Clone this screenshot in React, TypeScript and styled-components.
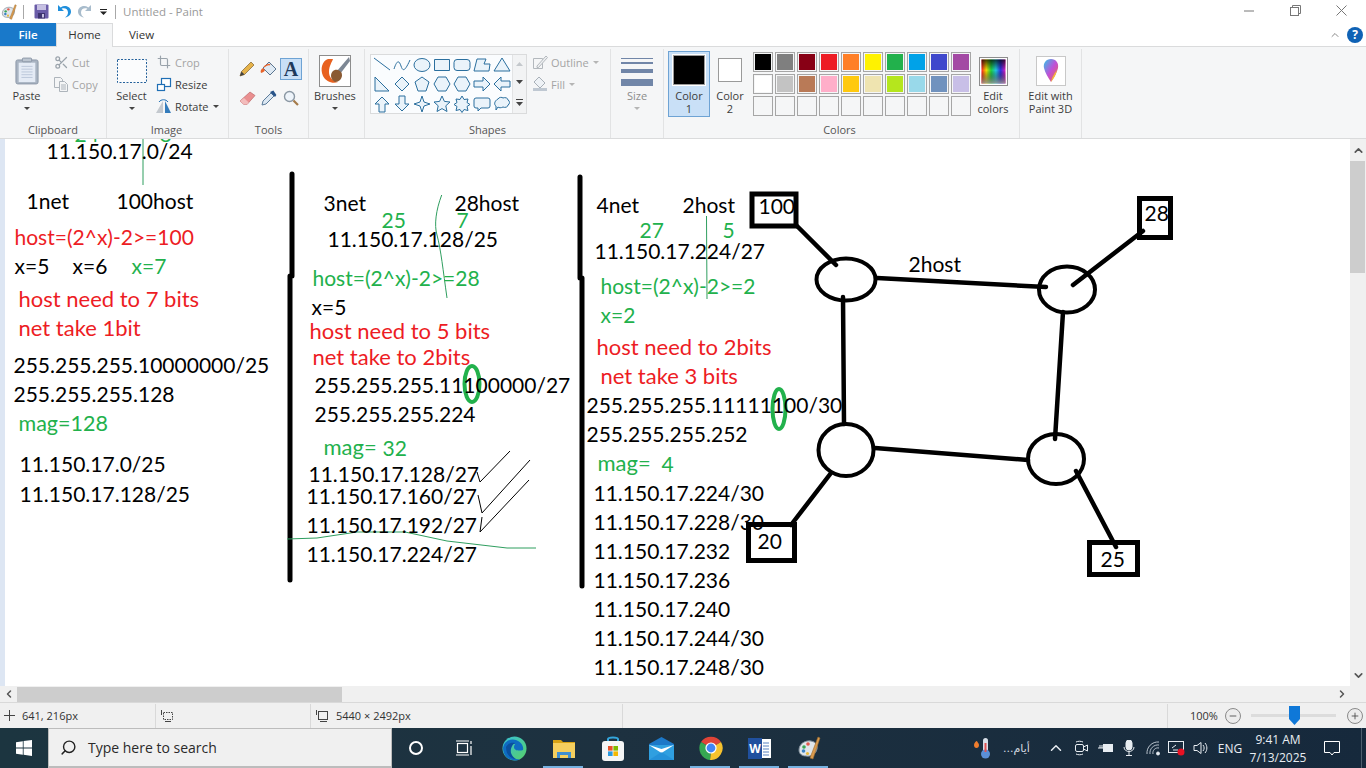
import styled, { createGlobalStyle } from 'styled-components'
import { ChevronUp, ChevronDown, ChevronLeft, ChevronRight, Minus, Plus, Search, Scissors, Crop } from 'lucide-react'

const GlobalStyle = createGlobalStyle`
  html, body { margin: 0; padding: 0; overflow: hidden; }
  body { font-family: "Open Sans", "Liberation Sans", sans-serif; background: #fff; }
`

const UI_TEXT = '#3c3c3c'
const RED = '#ed1c24'
const GREEN = '#22b14c'

const Page = styled.div`
  width: 1366px;
  height: 768px;
  display: flex;
  flex-direction: column;
  overflow: hidden;
`

/* ---------- title bar ---------- */

const TitleBar = styled.div`
  height: 23px;
  flex: none;
  display: flex;
  align-items: center;
  background: #fff;
  padding-right: 2px;
`

const QuickIcon = styled.div<{ $w: number; $ml?: number }>`
  width: ${p => p.$w}px;
  margin-left: ${p => p.$ml ?? 0}px;
  height: 16px;
  display: flex;
  align-items: center;
  justify-content: center;
`

const TitleSep = styled.div<{ $ml: number }>`
  width: 1px;
  height: 14px;
  margin-left: ${p => p.$ml}px;
  background: #a8a8a8;
`

const TitleText = styled.div`
  margin-left: 7px;
  font-size: 11.5px;
  color: #9a9a9a;
  flex: 1;
`

const WindowButton = styled.div`
  width: 46px;
  height: 21px;
  align-self: flex-start;
  display: flex;
  align-items: center;
  justify-content: center;
`

/* ---------- tabs ---------- */

const TabRow = styled.div`
  height: 23px;
  flex: none;
  display: flex;
  align-items: flex-start;
  background: #fff;
  border-bottom: 1px solid #dadbdc;
`

const FileTab = styled.div`
  width: 56px;
  height: 23px;
  padding-bottom: 1px;
  box-sizing: border-box;
  background: #1979ca;
  color: #fff;
  font-size: 11.5px;
  font-weight: 600;
  display: flex;
  align-items: center;
  justify-content: center;
`

const Tab = styled.div<{ $active?: boolean }>`
  width: 57px;
  height: 24px;
  padding-bottom: 2px;
  box-sizing: border-box;
  font-size: 11.5px;
  color: #333;
  display: flex;
  align-items: center;
  justify-content: center;
  background: ${p => (p.$active ? '#f5f6f7' : 'transparent')};
  border: 1px solid ${p => (p.$active ? '#dadbdc' : 'transparent')};
  border-bottom: none;
`

const HelpArea = styled.div`
  margin-left: auto;
  height: 23px;
  display: flex;
  align-items: center;
  gap: 6px;
  padding-right: 3px;
`

const HelpBadge = styled.div`
  width: 16px;
  height: 16px;
  border-radius: 50%;
  background: #0f62b5;
  color: #fff;
  font-size: 12px;
  font-weight: 700;
  display: flex;
  align-items: center;
  justify-content: center;
`

/* ---------- ribbon ---------- */

const Ribbon = styled.div`
  height: 92px;
  flex: none;
  display: flex;
  background: #f5f6f7;
  border-bottom: 1px solid #dadbdc;
  box-sizing: border-box;
`

const Group = styled.div<{ $w: number }>`
  width: ${p => p.$w}px;
  flex: none;
  box-sizing: border-box;
  display: flex;
  flex-direction: column;
  border-right: 1px solid #e2e3e4;
  margin: 2px 0 0;
`

const GroupBody = styled.div<{ $pl?: number }>`
  flex: 1;
  min-height: 0;
  display: flex;
  padding-left: ${p => p.$pl ?? 0}px;
`

const GroupLabel = styled.div<{ $mr?: number }>`
  height: 16px;
  flex: none;
  margin-right: ${p => p.$mr ?? 0}px;
  font-size: 11px;
  color: #555;
  text-align: center;
  line-height: 16px;
`

const LargeButton = styled.div<{ $w: number; $ml?: number }>`
  width: ${p => p.$w}px;
  margin-left: ${p => p.$ml ?? 0}px;
  flex: none;
  display: flex;
  flex-direction: column;
  align-items: center;
  font-size: 11px;
  line-height: 13px;
  color: ${UI_TEXT};
  text-align: center;
`

const LargeIcon = styled.div`
  height: 34px;
  margin-top: 5px;
  margin-bottom: 1px;
  display: flex;
  align-items: center;
  justify-content: center;
`

const DimLabel = styled.div`
  color: #8c8c8c;
`

const Caret = styled.div<{ $dim?: boolean }>`
  width: 0;
  height: 0;
  margin-top: 5px;
  border-left: 3px solid transparent;
  border-right: 3px solid transparent;
  border-top: 3px solid ${p => (p.$dim ? '#b5b5b5' : '#444')};
`

const InlineCaret = styled(Caret)`
  margin: 0 0 0 1px;
`

const SmallColumn = styled.div<{ $mt: number; $ml?: number }>`
  display: flex;
  flex-direction: column;
  margin-top: ${p => p.$mt}px;
  margin-left: ${p => p.$ml ?? 0}px;
`

const SmallButton = styled.div<{ $dim?: boolean }>`
  height: 22px;
  display: flex;
  align-items: center;
  gap: 3px;
  font-size: 11px;
  color: ${p => (p.$dim ? '#a4a4a4' : UI_TEXT)};
`

const SmallGlyph = styled.div`
  width: 16px;
  height: 16px;
  display: flex;
  align-items: center;
  justify-content: center;
`

const ToolGrid = styled.div`
  display: grid;
  grid-template-columns: repeat(3, 22px);
  grid-auto-rows: 29px;
  margin: 9px 0 0 7px;
  height: 58px;
`

const ToolCell = styled.div<{ $active?: boolean }>`
  width: 22px;
  height: 22px;
  box-sizing: border-box;
  display: flex;
  align-items: center;
  justify-content: center;
  background: ${p => (p.$active ? '#c9e0f7' : 'transparent')};
  border: 1px solid ${p => (p.$active ? '#6ea3d4' : 'transparent')};
`

const TextToolGlyph = styled.span`
  font-family: "Liberation Serif", serif;
  font-weight: 700;
  font-size: 20px;
  line-height: 20px;
  color: #1f3a5c;
`

const ShapeGallery = styled.div`
  width: 157px;
  height: 60px;
  margin: 5px 0 0 5px;
  box-sizing: border-box;
  border: 1px solid #dadbdc;
  display: flex;
  background: #fff;
  flex: none;
`

const ShapeGrid = styled.div`
  flex: 1;
  display: grid;
  grid-template-columns: repeat(7, 20px);
  grid-auto-rows: 19.5px;
  padding-left: 1px;
  background: #fafcfe;
`

const ShapeCell = styled.div`
  display: flex;
  align-items: center;
  justify-content: center;
`

const GalleryScroll = styled.div`
  width: 14px;
  background: #f2f3f4;
  border-left: 1px solid #e2e3e4;
  display: flex;
  flex-direction: column;
  align-items: center;
  justify-content: space-around;
`

const SizeLines = styled.div`
  display: flex;
  flex-direction: column;
  width: 32px;
  margin-top: 7px;
  height: 33px;
`

const SizeLine = styled.div<{ $h: number; $mt: number }>`
  height: ${p => p.$h}px;
  margin-top: ${p => p.$mt}px;
  background: #7186a8;
`

const ColorButton = styled.div<{ $active?: boolean }>`
  box-sizing: border-box;
  width: ${p => (p.$active ? 42 : 40)}px;
  height: 66px;
  margin-top: 2px;
  flex: none;
  display: flex;
  flex-direction: column;
  align-items: center;
  background: ${p => (p.$active ? '#c9e0f7' : 'transparent')};
  border: 1px solid ${p => (p.$active ? '#6ea3d4' : 'transparent')};
  font-size: 11px;
  line-height: 13px;
  color: ${UI_TEXT};
  text-align: center;
`

const ColorChip = styled.div<{ $size: number; $h: number; $bg: string; $mt: number; $mb: number }>`
  width: ${p => p.$size}px;
  height: ${p => p.$h}px;
  background: ${p => p.$bg};
  margin-top: ${p => p.$mt}px;
  margin-bottom: ${p => p.$mb}px;
  box-sizing: border-box;
  border: 1px solid #9a9a9a;
  outline: ${p => (p.$bg === '#000000' ? '1px solid #fff' : 'none')};
`

const Palette = styled.div`
  display: grid;
  grid-template-columns: repeat(10, 20px);
  grid-auto-rows: 20px;
  gap: 2px;
  margin: 3px 0 0 3px;
  flex: none;
`

const Swatch = styled.div<{ $bg?: string }>`
  box-sizing: border-box;
  border: 1px solid #a6a6a6;
  background: ${p => p.$bg ?? '#f5f6f7'};
  box-shadow: inset 0 0 0 1px #f5f6f7;
`

/* ---------- canvas ---------- */

const CanvasRow = styled.div`
  flex: 1;
  min-height: 0;
  display: flex;
`

const Gutter = styled.div`
  width: 5px;
  flex: none;
  background: #dde6f3;
`

const Sheet = styled.div`
  flex: 1;
  position: relative;
  overflow: hidden;
  background: #fff;
`

const Strokes = styled.svg`
  position: absolute;
  left: 0;
  top: 0;
`

const Note = styled.div<{ $x: number; $y: number; $c?: string; $s?: number }>`
  position: absolute;
  left: ${p => p.$x - 5.5}px;
  top: ${p => p.$y - 139 - 13}px;
  line-height: 24px;
  white-space: nowrap;
  font-family: Lato, "Open Sans", sans-serif;
  font-size: ${p => p.$s ?? 21}px;
  color: ${p => p.$c ?? '#000'};
`

const VScroll = styled.div`
  width: 16px;
  flex: none;
  background: #f0f0f0;
  display: flex;
  flex-direction: column;
  align-items: center;
`

const ScrollEnd = styled.div`
  height: 22px;
  flex: none;
  display: flex;
  align-items: center;
  justify-content: center;
`

const VThumb = styled.div`
  width: 15px;
  margin-right: 1px;
  height: 112px;
  background: #cdcdcd;
  flex: none;
`

const VFill = styled.div`
  flex: 1;
`

const HScroll = styled.div`
  height: 17px;
  flex: none;
  box-sizing: border-box;
  background: #f0f0f0;
  display: flex;
  align-items: center;
  border-bottom: 1px solid #d9d9d9;
`

const HThumb = styled.div`
  width: 325px;
  height: 15px;
  background: #cdcdcd;
`

const HEnd = styled.div`
  width: 17px;
  height: 15px;
  display: flex;
  align-items: center;
  justify-content: center;
`

const HFill = styled.div`
  flex: 1;
`

const HCorner = styled.div`
  width: 16px;
  flex: none;
`

/* ---------- status bar ---------- */

const StatusBar = styled.div`
  height: 25px;
  flex: none;
  background: #f0f0f0;
  display: flex;
  align-items: center;
  font-size: 11px;
  color: #333;
`

const StatusCell = styled.div<{ $w: number }>`
  width: ${p => p.$w}px;
  flex: none;
  height: 24px;
  box-sizing: border-box;
  padding-left: 4px;
  border-right: 1px solid #d9d9d9;
  display: flex;
  align-items: center;
  gap: 7px;
`

const ZoomArea = styled.div`
  width: 198px;
  height: 24px;
  flex: none;
  display: flex;
  align-items: center;
  padding-left: 22px;
  box-sizing: border-box;
`

const ZoomRound = styled.div<{ $ml?: number }>`
  width: 14px;
  height: 14px;
  margin-left: ${p => p.$ml ?? 0}px;
  border-radius: 50%;
  border: 1px solid #8a8a8a;
  background: #ececec;
  display: flex;
  align-items: center;
  justify-content: center;
  flex: none;
`

const ZoomTrack = styled.div`
  width: 85px;
  height: 3px;
  background: #dcdcdc;
  margin: 0 11px 0 10px;
  position: relative;
  flex: none;
`

const ZoomThumb = styled.svg`
  position: absolute;
  left: 38px;
  top: -8px;
`

/* ---------- taskbar ---------- */

const Taskbar = styled.div`
  height: 40px;
  flex: none;
  display: flex;
  align-items: stretch;
  background: linear-gradient(90deg, #1c3540 0%, #1d3140 45%, #16293c 100%);
  color: #e8edf2;
`

const StartButton = styled.div`
  width: 48px;
  flex: none;
  display: flex;
  align-items: center;
  justify-content: center;
`

const SearchBox = styled.div`
  width: 344px;
  flex: none;
  box-sizing: border-box;
  background: #f0f0f0;
  border: 1px solid #bcbcbc;
  border-bottom-width: 2px;
  display: flex;
  align-items: center;
  padding-left: 11px;
  gap: 11px;
  font-size: 14px;
  color: #2a2a2a;
`

const SearchGlass = styled(Search)`
  transform: scaleX(-1);
`

const TaskButton = styled.div<{ $w?: number; $open?: boolean }>`
  width: ${p => p.$w ?? 49}px;
  flex: none;
  position: relative;
  display: flex;
  align-items: center;
  justify-content: center;

  &::after {
    content: '';
    position: absolute;
    display: ${p => (p.$open ? 'block' : 'none')};
    left: 4px;
    right: 5px;
    bottom: 0;
    height: 2px;
    background: #76b1e0;
  }
`

const TaskGap = styled.div`
  width: 2px;
  flex: none;
`

const Spacer = styled.div`
  flex: 1;
`

const TrayItem = styled.div<{ $w: number }>`
  width: ${p => p.$w}px;
  flex: none;
  display: flex;
  align-items: center;
  justify-content: center;
  font-size: 12px;
`

const WeatherItem = styled.div`
  width: 72px;
  flex: none;
  box-sizing: border-box;
  padding-left: 2px;
  display: flex;
  align-items: center;
  gap: 11px;
`

const WeatherText = styled.span`
  font-family: "DejaVu Sans", sans-serif;
  font-size: 11px;
  color: #d5dbe0;
`

const Clock = styled.div`
  width: 62px;
  flex: none;
  display: flex;
  flex-direction: column;
  align-items: center;
  justify-content: center;
  font-size: 12px;
  line-height: 17px;
  gap: 1px;
`

const ShowDesktop = styled.div`
  width: 11px;
  flex: none;
  position: relative;

  &::before {
    content: '';
    position: absolute;
    left: 6px;
    top: 0;
    bottom: 0;
    width: 1px;
    background: #4d5f6e;
  }
`

/* ---------- drawings ---------- */

const PaintLogo = ({ size = 16 }: { size?: number }) => (
  <svg width={size} height={size} viewBox="0 0 24 24">
    <path d="M2 14c0-6 6-10 12-9 5 1 7 4 6 8-1 5-6 8-11 7-4 0-7-2-7-6z" fill="#dfe5ea" stroke="#7c8a96" />
    <circle cx="7" cy="11" r="1.8" fill="#3aa655" />
    <circle cx="11" cy="8" r="1.8" fill="#e2574c" />
    <circle cx="6.5" cy="15" r="1.8" fill="#3b82c4" />
    <circle cx="10.5" cy="17.5" r="1.6" fill="#e8b93c" />
    <path d="M21 1l2 1-7 21-3-1z" fill="#d99a4e" stroke="#9a6a2c" strokeWidth=".6" />
  </svg>
)

const SaveIcon = () => (
  <svg width="15" height="15" viewBox="0 0 15 15">
    <rect x=".5" y=".5" width="14" height="14" rx="1" fill="#6a5ca8" />
    <rect x="3" y="1" width="9" height="5" fill="#c6c0e2" />
    <rect x="4" y="9" width="7" height="5.5" fill="#3e3470" />
    <rect x="8" y="10" width="2" height="3.5" fill="#c6c0e2" />
  </svg>
)

const UndoIcon = ({ color }: { color: string }) => (
  <svg width="14" height="15" viewBox="0 0 14 15">
    <path d="M1 1v6h6L4.6 4.8C7.5 3.4 11 5 11 8.4c0 2.3-1.3 4-3 5 3.500-.2 6-2.600 6-5.600C14 3 8.500.4 3.600 3.400L1 1z" fill={color} />
  </svg>
)

const RedoIcon = ({ color }: { color: string }) => (
  <svg width="14" height="15" viewBox="0 0 14 15">
    <path d="M13 1v6H7l2.400-2.200C6.500 3.400 3 5 3 8.400c0 2.300 1.300 4 3 5-3.500-.2-6-2.600-6-5.600C0 3 5.500.4 10.400 3.400L13 1z" fill={color} />
  </svg>
)

const PasteIcon = () => (
  <svg width="24" height="28" viewBox="0 0 26 30">
    <rect x="1" y="3" width="24" height="26" rx="2" fill="#a9b4c2" stroke="#8a96a6" />
    <rect x="4" y="6" width="18" height="21" fill="#e4ebf5" />
    <path d="M7 10h12M7 13h12M7 16h12M7 19h12M7 22h12" stroke="#b8c4d8" />
    <rect x="8" y="1" width="10" height="4" rx="1" fill="#bcc5d0" stroke="#8a96a6" />
  </svg>
)

const CopyIcon = () => (
  <svg width="16" height="16" viewBox="0 0 16 16" fill="#f4f5f6" stroke="#adb4bb">
    <path d="M1.500 1.500h6l2 2v8h-8z" />
    <path d="M6.500 5.500h5l3 3v7h-8z" />
    <path d="M8 9h5M8 11h5M8 13h5" />
  </svg>
)

const ResizeIcon = () => (
  <svg width="16" height="16" viewBox="0 0 16 16" fill="none" stroke="#1f6fb5" strokeWidth="1.2">
    <rect x="5.500" y="2.500" width="9" height="8" fill="#fff" />
    <rect x="1.500" y="8.500" width="7" height="6" fill="#fff" />
  </svg>
)

const RotateIcon = () => (
  <svg width="16" height="16" viewBox="0 0 16 16">
    <path d="M7 3v12H0z" fill="#c4c9cf" />
    <path d="M9 3v12h6z" fill="#1f6fb5" opacity=".9" />
    <path d="M3 4c2-3 7-3 9 0" fill="none" stroke="#1f6fb5" />
  </svg>
)

const PencilIcon = () => (
  <svg width="16" height="16" viewBox="0 0 16 16">
    <path d="M12 1l3 3-9.500 9.500L1 15l1.500-4.500z" fill="#e6b34a" stroke="#7d6230" strokeWidth=".7" />
    <path d="M1 15l1.500-4.500 3 3z" fill="#444" />
  </svg>
)

const BucketIcon = () => (
  <svg width="18" height="18" viewBox="0 0 18 18">
    <path d="M9 2l7 7-6 6-7-7z" fill="#dfeaf4" stroke="#5a7590" />
    <path d="M3 8c-2 1-3 3-2 5 2-1 3-1 4-3z" fill="#e8632a" />
    <path d="M4 7c2-2 5-3 6-2" stroke="#e8632a" strokeWidth="1.5" fill="none" />
  </svg>
)

const EraserIcon = () => (
  <svg width="17" height="15" viewBox="0 0 17 15">
    <path d="M11 1l5 3.500-8 9H5L1 10z" fill="#ea8f90" stroke="#bc6a6c" strokeWidth=".7" />
    <path d="M1 10l4 3.500h3l1.700-2L5 7z" fill="#f3bcbc" />
  </svg>
)

const PickerIcon = () => (
  <svg width="16" height="16" viewBox="0 0 16 16">
    <path d="M10 3l3 3-8 8-4 1 1-4z" fill="#dbe7f2" stroke="#5b7b9a" />
    <path d="M9 2l5 5 1.400-2-3-4.400z" fill="#28548a" />
  </svg>
)

const MagnifyIcon = () => (
  <svg width="16" height="16" viewBox="0 0 16 16">
    <circle cx="6.500" cy="6.500" r="5" fill="#eef4fa" stroke="#8b98a4" strokeWidth="1.4" />
    <path d="M10.500 10.500L15 15" stroke="#a57b4a" strokeWidth="2.2" />
  </svg>
)

const BrushesIcon = () => (
  <svg width="32" height="32" viewBox="0 0 32 32">
    <rect x=".5" y=".5" width="31" height="31" fill="#fff" stroke="#8d8d8d" />
    <path d="M9 4c-6 2-8 10-5 17 3 6 10 8 15 6-6-1-9-5-9-10 0-6 3-10 4-13z" fill="#e8611f" />
    <path d="M30 2L18 16l3 3L31 6z" fill="#7d8794" />
    <path d="M19 15c-4-1-7 2-7 6 0 3 2 5 4 6 4 0 7-3 7-7 0-3-2-4-4-5z" fill="#8a5a33" />
  </svg>
)

const shapePaths = [
  'M1 2l16 12',
  'M1 13c3-9 5-9 7-3s4 5 9-6',
  'ELLIPSE',
  'M1.500 3.500h15v11h-15z',
  'M4 3.500h10a3 3 0 013 3v5a3 3 0 01-3 3H4a3 3 0 01-3-3v-5a3 3 0 013-3z',
  'M4 3h9l-2 5h6l-1 7H1z',
  'M9 2l8 13H1z',
  'M2 2l14 14H2z',
  'M9 2l7 7-7 7-7-7z',
  'M9 2l7 5-3 9H5L2 7z',
  'M5 2h8l4 7-4 7H5L1 9z',
  'M5 2h8l4 7-4 7H5L1 9z',
  'M1 6h9V2l7 7-7 7v-4H1z',
  'M17 6H8V2L1 9l7 7v-4h9z',
  'M6 17V9H2l7-7 7 7h-4v8z',
  'M6 1v8H2l7 7 7-7h-4V1z',
  'M9 1l2 6 6 2-6 2-2 6-2-6-6-2 6-2z',
  'M9 1l2.400 5.400 5.600.6-4.200 3.800L14 16.500 9 13.600 4 16.500l1.200-5.700L1 7l5.600-.6z',
  'M9 1l2 3.500 4-.5-1 3.500 3 2-3 2 1 4-4-1-2 3-2-3-4 1 1-4-3-2 3-2-1-3.500 4 .5z',
  'M3 3h12a2 2 0 012 2v6a2 2 0 01-2 2H8l-3 3v-3H3a2 2 0 01-2-2V5a2 2 0 012-2z',
  'BUBBLE',
]

const ShapeIcon = ({ d }: { d: string }) => (
  <svg width="18" height="18" viewBox="0 0 18 18" fill="#eaf3fa" stroke="#2b6f9e" strokeWidth="1">
    {d === 'ELLIPSE' ? (
      <ellipse cx="9" cy="9" rx="8" ry="6.500" />
    ) : d === 'BUBBLE' ? (
      <path d="M5 4c1-2 4-2 5-1 2-1 5 0 5 2 2 1 2 4 0 5 0 2-3 3-5 2-2 1-4 1-5 0l-2 3v-4c-2-1-2-5 2-7z" />
    ) : (
      <path d={d} fill={d.startsWith('M1 2l') || d.startsWith('M1 13') ? 'none' : undefined} />
    )}
  </svg>
)

const OutlineIcon = () => (
  <svg width="16" height="16" viewBox="0 0 16 16" fill="none" stroke="#b3b8bd">
    <path d="M1.500 4.500h9v10h-9z" />
    <path d="M5 12L14 2l1.500 1.500-9 10H5z" fill="#eef0f2" />
  </svg>
)

const FillIcon = () => (
  <svg width="16" height="16" viewBox="0 0 16 16">
    <path d="M7 1l6 6-5 5-6-6z" fill="#eef2f6" stroke="#a8b0b8" />
    <rect x="1" y="12" width="14" height="3" fill="#bfc8d2" />
  </svg>
)

const RainbowIcon = () => (
  <svg width="29" height="29" viewBox="0 0 29 29">
    <defs>
      <linearGradient id="hue" x1="0" x2="1" y1="0" y2="0">
        <stop offset="0" stopColor="#ff2020" />
        <stop offset=".2" stopColor="#f5e000" />
        <stop offset=".4" stopColor="#20d040" />
        <stop offset=".6" stopColor="#20c8e0" />
        <stop offset=".8" stopColor="#3030e0" />
        <stop offset="1" stopColor="#e020c0" />
      </linearGradient>
      <linearGradient id="shade" x1="0" x2="0" y1="0" y2="1">
        <stop offset="0" stopColor="#000" stopOpacity=".75" />
        <stop offset=".45" stopColor="#000" stopOpacity="0" />
        <stop offset="1" stopColor="#999" stopOpacity=".9" />
      </linearGradient>
    </defs>
    <rect x=".5" y=".5" width="28" height="28" fill="#fff" stroke="#8d8d8d" />
    <rect x="2.500" y="2.500" width="24" height="24" fill="url(#hue)" />
    <rect x="2.500" y="2.500" width="24" height="24" fill="url(#shade)" />
  </svg>
)

const Paint3DIcon = () => (
  <svg width="30" height="30" viewBox="0 0 30 30">
    <defs>
      <linearGradient id="drop" x1="0" x2="1" y1="0" y2="1">
        <stop offset="0" stopColor="#2ec5e8" />
        <stop offset=".5" stopColor="#c050d8" />
        <stop offset="1" stopColor="#f06a3a" />
      </linearGradient>
    </defs>
    <rect x=".5" y=".5" width="29" height="29" fill="#fff" stroke="#c8c8c8" />
    <path d="M15 3c5 0 8 4 7 9-1 5-4 9-7 14-3-5-6-9-7-14-1-5 2-9 7-9z" fill="url(#drop)" />
    <path d="M15 26c1-5 3-8 6-12-1 5-3 8-6 12z" fill="#f4b63a" />
  </svg>
)

const WinLogo = () => (
  <svg width="16" height="16" viewBox="0 0 16 16" fill="#fff">
    <path d="M0 2.200l6.800-1v6.300H0zM7.600 1.100L16 0v7.500H7.600zM0 8.400h6.800v6.400L0 13.800zM7.600 8.400H16V16l-8.400-1.200z" />
  </svg>
)

const TaskViewIcon = () => (
  <svg width="16" height="16" viewBox="0 0 16 16" fill="none" stroke="#fff" strokeWidth="1.2">
    <rect x="1.500" y="3.500" width="10" height="9" />
    <path d="M0 1h13M0 15h13M15 1v3M15 6v9" />
  </svg>
)

const EdgeIcon = () => (
  <svg width="25" height="25" viewBox="0 0 25 25">
    <defs>
      <linearGradient id="edgeA" x1="0" x2="1" y1="0" y2="1">
        <stop offset="0" stopColor="#37c0d8" />
        <stop offset="1" stopColor="#58d068" />
      </linearGradient>
    </defs>
    <circle cx="12.500" cy="12.500" r="12" fill="url(#edgeA)" />
    <path d="M1 12C2 5 9 2 14 4c5 2 8 6 7 10-3 1-9 1-9-3 0-2 2-3 1-3C8 7 5 13 8 18c2 4 6 6 10 5-6 4-17 0-17-11z" fill="#0f6cc2" />
    <path d="M4 11c2-4 6-5 9-4-2 1-5 5-4 10 1 3 3 5 5 6-5 0-10-4-10-12z" fill="#0a4f9e" />
  </svg>
)

const FolderIcon = () => (
  <svg width="22" height="19" viewBox="0 0 22 19">
    <path d="M0 1h8l2 2h12v3H0z" fill="#d7a215" />
    <path d="M0 4h22v15H0z" fill="#f5cf5e" />
    <path d="M4 13h14v6h-3v-3H7v3H4z" fill="#3f8fd2" />
  </svg>
)

const StoreIcon = () => (
  <svg width="24" height="25" viewBox="0 0 24 25">
    <path d="M7 6V3c0-2 10-2 10 0v3" fill="none" stroke="#34a6dc" strokeWidth="2" />
    <rect x="1" y="5" width="22" height="20" rx="3" fill="#f5f5f5" />
    <rect x="7" y="10" width="4.600" height="4.600" fill="#e8502a" />
    <rect x="12.400" y="10" width="4.600" height="4.600" fill="#7fba00" />
    <rect x="7" y="15.400" width="4.600" height="4.600" fill="#2b9ae0" />
    <rect x="12.400" y="15.400" width="4.600" height="4.600" fill="#f5b800" />
  </svg>
)

const MailIcon = () => (
  <svg width="25" height="23" viewBox="0 0 25 23">
    <path d="M0 7l12.500-7L25 7v16H0z" fill="#1c78c8" />
    <path d="M0 8h25v15H0z" fill="#2f9fe0" />
    <path d="M0 8l12.500 8L25 8l-12.500 4z" fill="#fff" />
    <path d="M0 23l12.500-8L25 23z" fill="#1e88d4" opacity=".6" />
  </svg>
)

const ChromeIcon = () => (
  <svg width="24" height="24" viewBox="0 0 24 24">
    <path d="M12 12L2 6a12 12 0 0120 0z" fill="#e04437" />
    <path d="M12 12L22 6a12 12 0 01-11 18z" fill="#f6c22e" />
    <path d="M12 12L11 24A12 12 0 012 6z" fill="#36a852" />
    <circle cx="12" cy="12" r="5.600" fill="#fff" />
    <circle cx="12" cy="12" r="4.400" fill="#4285f4" />
  </svg>
)

const WordIcon = () => (
  <svg width="23" height="21" viewBox="0 0 23 21">
    <rect x="9" y="1" width="14" height="19" fill="#fff" />
    <path d="M15 5h6M15 8h6M15 11h6M15 14h6M15 17h6" stroke="#5a82c0" />
    <rect x="0" y="0" width="14" height="21" fill="#20509e" />
    <text x="7" y="15" textAnchor="middle" fontSize="12" fontWeight="700" fontFamily="Open Sans, sans-serif" fill="#fff">W</text>
  </svg>
)

const TrayIcon = ({ children, w = 16 }: { children: React.ReactNode; w?: number }) => (
  <svg width={w} height="16" viewBox={`0 0 ${w} 16`} fill="none" stroke="#e8edf2" strokeWidth="1">
    {children}
  </svg>
)

/* ---------- data ---------- */

const paletteRow1 = ['#000000', '#7f7f7f', '#880015', '#ed1c24', '#ff7f27', '#fff200', '#22b14c', '#00a2e8', '#3f48cc', '#a349a4']
const paletteRow2 = ['#ffffff', '#c3c3c3', '#b97a57', '#ffaec9', '#ffc90e', '#efe4b0', '#b5e61d', '#99d9ea', '#7092be', '#c8bfe7']

type NoteLine = [string, number, number, string?, number?]

const notes: NoteLine[] = [
  ['24', 75, 135, GREEN],
  ['8', 160, 135, GREEN],
  ['11.150.17.0/24', 47, 152],
  ['1net', 27, 202],
  ['100host', 117, 202],
  ['host=(2^x)-2>=100', 15, 238, RED],
  ['x=5', 15, 267],
  ['x=6', 73, 267],
  ['x=7', 132, 267, GREEN],
  ['host need to 7 bits', 19, 300, RED, 22],
  ['net take 1bit', 19, 329, RED, 22],
  ['255.255.255.10000000/25', 14, 366],
  ['255.255.255.128', 14, 395],
  ['mag=128', 19, 424, GREEN, 21.5],
  ['11.150.17.0/25', 20, 465],
  ['11.150.17.128/25', 20, 495],

  ['3net', 324, 204],
  ['28host', 455, 204],
  ['25', 382, 221, GREEN],
  ['7', 457, 221, GREEN],
  ['11.150.17.128/25', 328, 240],
  ['host=(2^x)-2>=28', 313, 279, GREEN],
  ['x=5', 312, 308],
  ['host need to 5 bits', 310, 332, RED, 22],
  ['net take to 2bits', 313, 358, RED, 22],
  ['255.255.255.11100000/27', 315, 386],
  ['255.255.255.224', 315, 415],
  ['mag=', 324, 448, GREEN, 22],
  ['32', 383, 449, GREEN],
  ['11.150.17.128/27', 309, 475],
  ['11.150.17.160/27', 307, 497],
  ['11.150.17.192/27', 307, 526],
  ['11.150.17.224/27', 307, 555],

  ['4net', 597, 206],
  ['2host', 683, 206],
  ['27', 640, 231, GREEN],
  ['5', 723, 231, GREEN],
  ['11.150.17.224/27', 595, 252],
  ['host=(2^x)-2>=2', 601, 287, GREEN],
  ['x=2', 601, 316, GREEN],
  ['host need to 2bits', 597, 348, RED, 22],
  ['net take 3 bits', 601, 377, RED, 22],
  ['255.255.255.11111100/30', 587, 406],
  ['255.255.255.252', 587, 435],
  ['mag=', 598, 464, GREEN, 22],
  ['4', 662, 465, GREEN],
  ['11.150.17.224/30', 594, 494],
  ['11.150.17.228/30', 594, 523],
  ['11.150.17.232', 594, 552],
  ['11.150.17.236', 594, 581],
  ['11.150.17.240', 594, 610],
  ['11.150.17.244/30', 594, 639],
  ['11.150.17.248/30', 594, 668],

  ['100', 759, 207],
  ['28', 1145, 214],
  ['2host', 909, 265],
  ['20', 758, 542],
  ['25', 1101, 560],
]

const App = () => (
  <Page>
    <GlobalStyle />
    <TitleBar>
      <QuickIcon $w={16} $ml={1}><PaintLogo /></QuickIcon>
      <TitleSep $ml={6} />
      <QuickIcon $w={15} $ml={10}><SaveIcon /></QuickIcon>
      <QuickIcon $w={14} $ml={8}><UndoIcon color="#1f8fdc" /></QuickIcon>
      <QuickIcon $w={14} $ml={7}><RedoIcon color="#a8bccc" /></QuickIcon>
      <QuickIcon $w={8} $ml={8}>
        <svg width="8" height="8" viewBox="0 0 8 8"><path d="M0 1h7v1H0zM0 3.500h7L3.500 7z" fill="#222" /></svg>
      </QuickIcon>
      <TitleSep $ml={7} />
      <TitleText>Untitled - Paint</TitleText>
      <WindowButton>
        <svg width="10" height="10" viewBox="0 0 10 10"><path d="M0 5h10" stroke="#777" /></svg>
      </WindowButton>
      <WindowButton>
        <svg width="11" height="11" viewBox="0 0 11 11" fill="none" stroke="#777"><path d="M2.500 2.500v-2h8v8h-2" /><rect x=".5" y="2.500" width="8" height="8" /></svg>
      </WindowButton>
      <WindowButton>
        <svg width="11" height="11" viewBox="0 0 11 11"><path d="M.5.5l10 10M10.500.5l-10 10" stroke="#777" /></svg>
      </WindowButton>
    </TitleBar>

    <TabRow>
      <FileTab>File</FileTab>
      <Tab $active>Home</Tab>
      <Tab>View</Tab>
      <HelpArea>
        <ChevronUp size={12} color="#8a8a8a" />
        <HelpBadge>?</HelpBadge>
      </HelpArea>
    </TabRow>

    <Ribbon>
      <Group $w={107}>
        <GroupBody>
          <LargeButton $w={53}>
            <LargeIcon><PasteIcon /></LargeIcon>
            Paste
            <Caret />
          </LargeButton>
          <SmallColumn $mt={2}>
            <SmallButton $dim><SmallGlyph><Scissors size={15} color="#9aa3ab" /></SmallGlyph>Cut</SmallButton>
            <SmallButton $dim><SmallGlyph><CopyIcon /></SmallGlyph>Copy</SmallButton>
          </SmallColumn>
        </GroupBody>
        <GroupLabel>Clipboard</GroupLabel>
      </Group>

      <Group $w={122}>
        <GroupBody>
          <LargeButton $w={49}>
            <LargeIcon>
              <svg width="32" height="26" viewBox="0 0 32 26"><rect x="1.500" y="1.500" width="29" height="23" fill="#fbfcfd" stroke="#24619b" strokeDasharray="2 1.500" /></svg>
            </LargeIcon>
            Select
            <Caret />
          </LargeButton>
          <SmallColumn $mt={2}>
            <SmallButton $dim><SmallGlyph><Crop size={14} color="#9aa3ab" /></SmallGlyph>Crop</SmallButton>
            <SmallButton><SmallGlyph><ResizeIcon /></SmallGlyph>Resize</SmallButton>
            <SmallButton><SmallGlyph><RotateIcon /></SmallGlyph>Rotate<InlineCaret /></SmallButton>
          </SmallColumn>
        </GroupBody>
        <GroupLabel $mr={2}>Image</GroupLabel>
      </Group>

      <Group $w={80}>
        <GroupBody>
          <ToolGrid>
            <ToolCell><PencilIcon /></ToolCell>
            <ToolCell><BucketIcon /></ToolCell>
            <ToolCell $active><TextToolGlyph>A</TextToolGlyph></ToolCell>
            <ToolCell><EraserIcon /></ToolCell>
            <ToolCell><PickerIcon /></ToolCell>
            <ToolCell><MagnifyIcon /></ToolCell>
          </ToolGrid>
        </GroupBody>
        <GroupLabel>Tools</GroupLabel>
      </Group>

      <Group $w={56}>
        <GroupBody>
          <LargeButton $w={52}>
            <LargeIcon><BrushesIcon /></LargeIcon>
            Brushes
            <Caret />
          </LargeButton>
        </GroupBody>
        <GroupLabel />
      </Group>

      <Group $w={246}>
        <GroupBody>
          <ShapeGallery>
            <ShapeGrid>
              {shapePaths.map((d, i) => (
                <ShapeCell key={i}><ShapeIcon d={d} /></ShapeCell>
              ))}
            </ShapeGrid>
            <GalleryScroll>
              <svg width="7" height="4" viewBox="0 0 7 4"><path d="M3.500 0L7 4H0z" fill="#c4c8cc" /></svg>
              <svg width="7" height="4" viewBox="0 0 7 4"><path d="M3.500 4L7 0H0z" fill="#444" /></svg>
              <svg width="7" height="7" viewBox="0 0 7 7"><path d="M0 0h7v1H0zM0 3h7L3.500 7z" fill="#444" /></svg>
            </GalleryScroll>
          </ShapeGallery>
          <SmallColumn $mt={2} $ml={5}>
            <SmallButton $dim><OutlineIcon />Outline<InlineCaret $dim /></SmallButton>
            <SmallButton $dim><FillIcon />Fill<InlineCaret $dim /></SmallButton>
          </SmallColumn>
        </GroupBody>
        <GroupLabel>Shapes</GroupLabel>
      </Group>

      <Group $w={53}>
        <GroupBody>
          <LargeButton $w={52}>
            <SizeLines>
              <SizeLine $h={1} $mt={2} />
              <SizeLine $h={2} $mt={3} />
              <SizeLine $h={4} $mt={5} />
              <SizeLine $h={7} $mt={6} />
            </SizeLines>
            <DimLabel>Size</DimLabel>
            <Caret $dim />
          </LargeButton>
        </GroupBody>
        <GroupLabel />
      </Group>

      <Group $w={356}>
        <GroupBody $pl={4}>
          <ColorButton $active>
            <ColorChip $size={32} $h={30} $bg="#000000" $mt={3} $mb={4} />
            Color<br />1
          </ColorButton>
          <ColorButton>
            <ColorChip $size={24} $h={24} $bg="#ffffff" $mt={6} $mb={7} />
            Color<br />2
          </ColorButton>
          <Palette>
            {paletteRow1.map(c => <Swatch key={c} $bg={c} />)}
            {paletteRow2.map(c => <Swatch key={c} $bg={c} />)}
            {paletteRow1.map(c => <Swatch key={`e${c}`} />)}
          </Palette>
          <LargeButton $w={42} $ml={1}>
            <LargeIcon><RainbowIcon /></LargeIcon>
            Edit<br />colors
          </LargeButton>
        </GroupBody>
        <GroupLabel $mr={4}>Colors</GroupLabel>
      </Group>

      <Group $w={62}>
        <GroupBody>
          <LargeButton $w={61}>
            <LargeIcon><Paint3DIcon /></LargeIcon>
            Edit with<br />Paint 3D
          </LargeButton>
        </GroupBody>
      </Group>
    </Ribbon>

    <CanvasRow>
      <Gutter />
      <Sheet>
        <Strokes width="1345" height="547" viewBox="5 139 1345 547" fill="none" stroke="#000">
          <g strokeWidth="5" strokeLinecap="round">
            <path d="M292 174V276M290 276V580" />
            <path d="M580 177V278M582 278V586" />
          </g>
          <g strokeWidth="4.500" strokeLinecap="round">
            <rect x="752" y="194" width="44" height="32" strokeWidth="5" />
            <rect x="1139.500" y="198.500" width="31" height="39" strokeWidth="5" />
            <rect x="748.500" y="524.500" width="46" height="36" strokeWidth="5" />
            <rect x="1089.500" y="542.500" width="48" height="32" strokeWidth="5" />
            <ellipse cx="846" cy="279.500" rx="29.500" ry="21" strokeWidth="4" />
            <ellipse cx="1067" cy="289.500" rx="28" ry="23" strokeWidth="4" />
            <ellipse cx="846" cy="450" rx="27.500" ry="26" strokeWidth="4" />
            <ellipse cx="1056" cy="459" rx="28" ry="25" strokeWidth="4" />
            <path d="M797 226L836 265" />
            <path d="M877 278L1046 287" />
            <path d="M843 297L844 424" />
            <path d="M1063 312L1055 439" />
            <path d="M875 448L1028 460" />
            <path d="M1143 231L1073 285" />
            <path d="M831 473L791 525" />
            <path d="M1076 471L1116 547" />
          </g>
          <g stroke="#2f9e5f" strokeWidth="1">
            <path d="M143 139V185" />
            <path d="M441.700 195C436 210 434 225 437 235C441 250 443 270 447 298" />
            <path d="M706.500 216L707 299" />
            <path d="M287 539L317 538L357 532L405 532L447 541L507 548L536 548" />
          </g>
          <g stroke={GREEN} strokeWidth="4">
            <ellipse cx="472" cy="384" rx="7.500" ry="18" />
            <ellipse cx="779" cy="409" rx="6.500" ry="20" />
          </g>
          <g strokeWidth="1">
            <path d="M510 451L480 482L477 472" />
            <path d="M530 460L482 513L478 495" />
            <path d="M529 480L480 532L482 517" />
          </g>
        </Strokes>
        {notes.map(([text, x, y, color, size], i) => (
          <Note key={i} $x={x} $y={y} $c={color} $s={size}>{text}</Note>
        ))}
      </Sheet>
      <VScroll>
        <ScrollEnd><ChevronUp size={13} strokeWidth={3} color="#555" /></ScrollEnd>
        <VThumb />
        <VFill />
        <ScrollEnd><ChevronDown size={13} strokeWidth={3} color="#555" /></ScrollEnd>
      </VScroll>
    </CanvasRow>

    <HScroll>
      <HEnd><ChevronLeft size={12} strokeWidth={3} color="#555" /></HEnd>
      <HThumb />
      <HFill />
      <HEnd><ChevronRight size={12} strokeWidth={3} color="#555" /></HEnd>
      <HCorner />
    </HScroll>

    <StatusBar>
      <StatusCell $w={156}>
        <svg width="11" height="11" viewBox="0 0 11 11"><path d="M5.500 0v11M0 5.500h11" stroke="#444" /></svg>
        641, 216px
      </StatusCell>
      <StatusCell $w={155}>
        <svg width="14" height="14" viewBox="0 0 14 14" fill="none" stroke="#444"><rect x="3.500" y="3.500" width="9" height="7" strokeDasharray="1.500 1" /><path d="M1.500 1v5M1 1.500h0M5 12.500h6" /></svg>
      </StatusCell>
      <StatusCell $w={312}>
        <svg width="14" height="14" viewBox="0 0 14 14" fill="none" stroke="#444"><rect x="3.500" y="2.500" width="9" height="8" /><path d="M1.500 1v5M5 12.500h7" /></svg>
        5440 × 2492px
      </StatusCell>
      <StatusCell $w={545} />
      <ZoomArea>
        100%
        <ZoomRound $ml={7}><Minus size={10} color="#444" /></ZoomRound>
        <ZoomTrack>
          <ZoomThumb width="11" height="19" viewBox="0 0 11 19"><path d="M0 0h11v13l-5.500 6L0 13z" fill="#0f78d8" /></ZoomThumb>
        </ZoomTrack>
        <ZoomRound><Plus size={10} color="#444" /></ZoomRound>
      </ZoomArea>
    </StatusBar>

    <Taskbar>
      <StartButton><WinLogo /></StartButton>
      <SearchBox>
        <SearchGlass size={17} color="#222" />
        Type here to search
      </SearchBox>
      <TaskButton $w={48}>
        <svg width="16" height="16" viewBox="0 0 16 16"><circle cx="8" cy="8" r="6" fill="none" stroke="#fff" strokeWidth="2" /></svg>
      </TaskButton>
      <TaskButton $w={48}><TaskViewIcon /></TaskButton>
      <TaskGap />
      <TaskButton><EdgeIcon /></TaskButton>
      <TaskButton $open><FolderIcon /></TaskButton>
      <TaskButton><StoreIcon /></TaskButton>
      <TaskButton><MailIcon /></TaskButton>
      <TaskButton $open><ChromeIcon /></TaskButton>
      <TaskButton $open><WordIcon /></TaskButton>
      <TaskButton $open><PaintLogo size={24} /></TaskButton>
      <Spacer />
      <WeatherItem>
        <svg width="20" height="24" viewBox="0 0 20 24">
          <path d="M2 9c0-2 2-4 3-4 0 1 2 2 2 4s-1 3-2.500 3S2 11 2 9z" fill="#ef7d2e" />
          <rect x="11" y="2" width="5" height="14" rx="2.500" fill="#d8dfe8" />
          <circle cx="13.500" cy="18" r="4.500" fill="#5b8fd8" />
          <rect x="12.500" y="7" width="2" height="9" fill="#e05050" />
        </svg>
        <WeatherText dir="rtl">أيام...</WeatherText>
      </WeatherItem>
      <TrayItem $w={27}><ChevronUp size={18} color="#e8edf2" /></TrayItem>
      <TrayItem $w={24}>
        <TrayIcon><rect x="2.500" y="4.500" width="8" height="7" rx="1.500" /><path d="M10.500 7l4-2v6l-4-2M3 2c2-1 5-1 7 0M3 14c2 1 5 1 7 0" /></TrayIcon>
      </TrayItem>
      <TrayItem $w={24}>
        <TrayIcon><rect x="6.500" y="4.500" width="9" height="7" fill="#e8edf2" /><path d="M1 8h5M3 5v3M5 5v3" /></TrayIcon>
      </TrayItem>
      <TrayItem $w={23}>
        <TrayIcon><rect x="5" y="0" width="6" height="10" rx="3" fill="#e8edf2" /><path d="M3 7c0 6 10 6 10 0M8 12v3M5 15.500h6" /></TrayIcon>
      </TrayItem>
      <TrayItem $w={25}>
        <TrayIcon><path d="M2 14a11 11 0 0112-12M5 14a8 8 0 019-9M8 14a5 5 0 016-6" stroke="#b8c2cc" /><circle cx="13" cy="13.500" r="1.500" fill="#e8edf2" /></TrayIcon>
      </TrayItem>
      <TrayItem $w={24}>
        <svg width="18" height="16" viewBox="0 0 18 16" fill="none" stroke="#e8edf2">
          <rect x=".5" y="1.500" width="15" height="11" />
          <path d="M4 8l4-3M5 10h5" />
          <circle cx="13" cy="12" r="3.500" fill="#e81123" stroke="none" />
        </svg>
      </TrayItem>
      <TrayItem $w={24}>
        <TrayIcon><path d="M1 5.500h3l4-3v11l-4-3H1zM10 5c1.500 2 1.500 4 0 6M12 3c2.500 3 2.500 7 0 10" /></TrayIcon>
      </TrayItem>
      <TrayItem $w={34}>ENG</TrayItem>
      <Clock>
        <span>9:41 AM</span>
        <span>7/13/2025</span>
      </Clock>
      <TrayItem $w={46}>
        <svg width="16" height="16" viewBox="0 0 16 16" fill="none" stroke="#fff"><path d="M.5 1.500h15v11H10l-2 2.500-2-2.500H.5z" /></svg>
      </TrayItem>
      <ShowDesktop />
    </Taskbar>
  </Page>
)

export default App
